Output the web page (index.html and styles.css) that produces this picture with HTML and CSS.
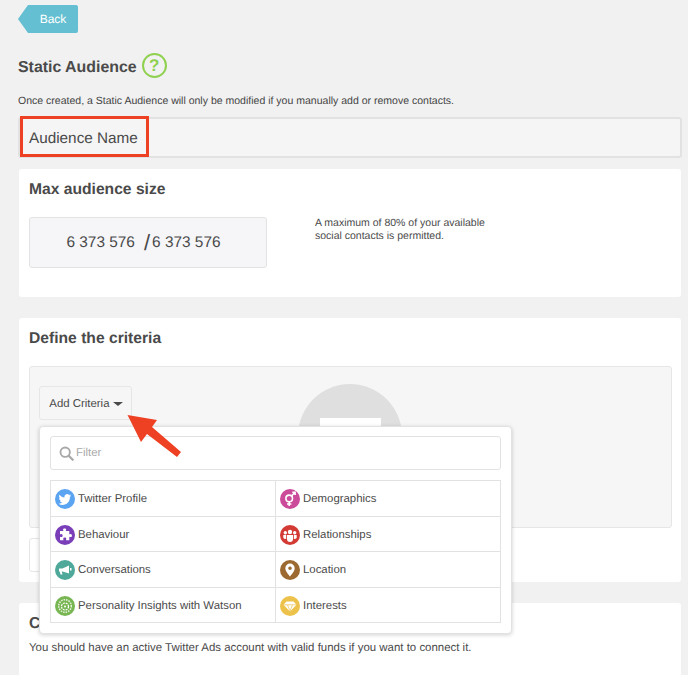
FILE: index.html
```html
<!DOCTYPE html>
<html lang="en">
<head>
<meta charset="utf-8">
<title>Static Audience</title>
<link rel="stylesheet" href="styles.css">
</head>
<body>
<div class="page">
  <a class="back">Back</a>
  <div class="title-row">
    <h1>Static Audience</h1>
    <span class="help">?</span>
  </div>
  <p class="intro">Once created, a Static Audience will only be modified if you manually add or remove contacts.</p>
  <div class="name-box"><span class="name-label">Audience Name</span></div>

  <section class="card card-size">
    <h2>Max audience size</h2>
    <div class="size-row">
      <div class="size-box"><span>6 373 576</span><span class="slash">/</span><span>6 373 576</span></div>
      <p class="size-note">A maximum of 80% of your available<br>social contacts is permitted.</p>
    </div>
  </section>

  <section class="card card-criteria">
    <h2>Define the criteria</h2>
    <div class="criteria-area">
      <button class="add-btn">Add Criteria <span class="caret"></span></button>
      <div class="placeholder"><span class="placeholder-bar"></span></div>
    </div>
    <div class="second-btn"></div>
  </section>

  <section class="card card-connect">
    <h2>Connect</h2>
    <p class="connect-text">You should have an active Twitter Ads account with valid funds if you want to connect it.</p>
  </section>
</div>

<div class="menu">
  <div class="filter">
    <svg class="filter-icon" viewBox="0 0 16 16" width="15" height="15"><circle cx="6.6" cy="6.6" r="5" fill="none" stroke="#a8a8a8" stroke-width="2"/><path d="M10.4 10.4 14.6 14.6" stroke="#a8a8a8" stroke-width="2.4" stroke-linecap="round"/></svg>
    <span>Filter</span>
  </div>
  <div class="grid">
    <div class="cell">
      <svg class="ico" viewBox="0 0 20 20"><circle cx="10" cy="10" r="10" fill="#5ba4f2"/><path d="M16 6.3c-.5.2-1 .4-1.5.4.5-.3 1-.8 1.2-1.4-.5.3-1.1.5-1.7.7a2.7 2.7 0 0 0-4.6 2.4C7.6 8.3 5.7 7.300 4.400 5.700c-.7 1.200-.4 2.800.8 3.600-.4 0-.8-.1-1.200-.3 0 1.300.9 2.400 2.100 2.700-.4.1-.8.1-1.200 0 .3 1.100 1.300 1.800 2.500 1.900-1.100.9-2.500 1.200-3.900 1.100 4.900 3 11.600.2 11.400-6.700.5-.4 1-.9 1.100-1.700z" fill="#fff"/></svg>
      Twitter Profile
    </div>
    <div class="cell">
      <svg class="ico" viewBox="0 0 20 20"><circle cx="10" cy="10" r="10" fill="#cb4a99"/><circle cx="9.2" cy="9.4" r="3.3" fill="none" stroke="#fff" stroke-width="1.6"/><path d="M9.2 12.7v4.3M7 15h4.4M11.5 7l3-3.2M12.3 3.2h2.8V6" fill="none" stroke="#fff" stroke-width="1.6"/></svg>
      Demographics
    </div>
    <div class="cell">
      <svg class="ico" viewBox="0 0 20 20"><circle cx="10" cy="10" r="10" fill="#7a3fb8"/><path d="M8 4.500c0-1.500 3.200-1.500 3.200 0 0 .7-.4 1-.4 1.500h3.500v3.300c.5 0 .8-.4 1.500-.4 1.500 0 1.500 3.200 0 3.200-.7 0-1-.4-1.500-.4v3.500h-3.300c0-.5.300-.8.300-1.500 0-1.500-3.100-1.500-3.100 0 0 .7.300 1 .3 1.500H5v-3.500c.5 0 .8.400 1.500.4 1.500 0 1.500-3.200 0-3.200-.7 0-1 .4-1.500.4V6h3.400c0-.5-.4-.8-.4-1.500z" fill="#fff"/></svg>
      Behaviour
    </div>
    <div class="cell">
      <svg class="ico" viewBox="0 0 20 20"><circle cx="10" cy="10" r="10" fill="#d23a33"/><circle cx="10" cy="7" r="2.2" fill="#fff"/><circle cx="5.3" cy="7.8" r="1.7" fill="#fff"/><circle cx="14.7" cy="7.8" r="1.7" fill="#fff"/><path d="M7 10h6v4a3 3 0 0 1-6 0zM3.300 10h2.900v4l-2-.3a1.500 1.500 0 0 1-.9-1zM13.800 10h2.900v2.700a1.500 1.500 0 0 1-.9 1l-2 .3z" fill="#fff"/></svg>
      Relationships
    </div>
    <div class="cell">
      <svg class="ico" viewBox="0 0 20 20"><circle cx="10" cy="10" r="10" fill="#4fa99a"/><path d="M4 8.500h3.500L14 5.500v8L7.500 11.500H6.800l.7 3H5.500L4.800 11.500H4zM15 8h1.500v2.500H15z" fill="#fff"/></svg>
      Conversations
    </div>
    <div class="cell">
      <svg class="ico" viewBox="0 0 20 20"><circle cx="10" cy="10" r="10" fill="#9c6a31"/><path fill-rule="evenodd" d="M10 3.500a4.700 4.700 0 0 0-4.700 4.700c0 3 3.400 6.400 4.700 8.300 1.300-1.900 4.700-5.300 4.700-8.300A4.700 4.700 0 0 0 10 3.500zm0 3a1.800 1.800 0 1 1 0 3.600 1.800 1.800 0 0 1 0-3.600z" fill="#fff"/></svg>
      Location
    </div>
    <div class="cell">
      <svg class="ico" viewBox="0 0 20 20"><circle cx="10" cy="10" r="10" fill="#78b653"/><circle cx="10" cy="10" r="6.3" fill="none" stroke="#e6f2dc" stroke-width="1.5" stroke-dasharray="1.5 1"/><circle cx="10" cy="10.5" r="3.5" fill="none" stroke="#fff" stroke-width="1.2" stroke-dasharray="2 .8"/><circle cx="10" cy="10.5" r="1" fill="#fff"/></svg>
      Personality Insights with Watson
    </div>
    <div class="cell">
      <svg class="ico" viewBox="0 0 20 20"><circle cx="10" cy="10" r="10" fill="#ecc24b"/><path d="M6.500 5.500h7l3 3.300L10 15.500 3.500 8.800z" fill="#fff"/><path d="M3.500 8.800h13M7.500 8.800 10 15M12.500 8.800 10 15" fill="none" stroke="#ecc24b" stroke-width=".7"/></svg>
      Interests
    </div>
  </div>
</div>

<svg class="red-arrow" viewBox="0 0 60 50" width="60" height="50"><path d="M2.500 2 32 7 27 14 56 39 52 44 22 21 16 29z" fill="#ee4023"/></svg>
</body>
</html>
```
FILE: styles.css
```css
* { box-sizing: border-box; }
html, body { margin: 0; padding: 0; }
body {
  position: relative;
  height: 675px;
  overflow: hidden;
  background: #f1f1f1;
  color: #4a4a4a;
  font-family: "Liberation Sans", Arial, sans-serif;
  text-rendering: geometricPrecision;
}
.page { padding: 5px 6px 0 18px; height: 675px; overflow: hidden; }
.back {
  position: relative;
  display: flex;
  align-items: center;
  justify-content: center;
  width: 50px;
  height: 28px;
  margin-left: 10px;
  background: #63bfd1;
  border-radius: 0 2px 2px 0;
  color: #fff;
  font-size: 12px;
}
.back::before {
  content: "";
  position: absolute;
  left: -10px;
  top: 0;
  border-top: 14px solid transparent;
  border-bottom: 14px solid transparent;
  border-right: 10px solid #63bfd1;
}
.title-row { display: flex; align-items: center; gap: 5px; margin-top: 19px; height: 27px; }
h1 { margin: 0; padding-top: 5px; font-size: 15.9px; font-weight: 700; color: #4a4a4a; }
.help {
  width: 25px;
  height: 25px;
  display: flex;
  align-items: center;
  justify-content: center;
  border: 2px solid #8fd14f;
  border-radius: 50%;
  color: #8fd14f;
  font-size: 17px;
  font-weight: 700;
}
.intro { margin: 15px 0 0; font-size: 10.53px; line-height: 14px; color: #444; }
.name-box {
  height: 41px;
  margin-top: 9px;
  background: #f5f5f5;
  border: 2px solid #e2e2e2;
  border-radius: 3px;
  display: flex;
  align-items: center;
}
.name-label {
  position: relative;
  display: flex;
  align-items: center;
  width: 129px;
  height: 41px;
  margin-top: -2px;
  padding: 5px 0 0 6px;
  border: 3px solid #ee4023;
  font-size: 15.3px;
  color: #4a4a4a;
}
.card {
  margin: 0 1px;
  background: #fff;
  border-radius: 3px;
  padding: 11px 10px 0;
}
h2 { margin: 0; font-size: 15.65px; line-height: 20px; font-weight: 700; color: #4a4a4a; }
.card-size { height: 128px; margin-top: 11px; }
.size-row { display: flex; margin-top: 17px; }
.size-box {
  width: 238px;
  height: 51px;
  padding-right: 9px;
  display: flex;
  align-items: center;
  justify-content: center;
  background: #f6f6f8;
  border: 1px solid #e3e3e3;
  border-radius: 3px;
  font-size: 15.4px;
  color: #4a4a4a;
}
.slash { font-size: 22px; margin: 0 2px 0 9px; }
.size-note { margin: 0 0 0 48px; font-size: 10.5px; line-height: 13px; color: #4a4a4a; }
.card-criteria { height: 264px; margin-top: 21px; padding-right: 9px; }
.criteria-area {
  position: relative;
  height: 162px;
  margin-top: 17px;
  padding: 19px 9px;
  background: #f6f6f6;
  border: 1px solid #e6e6e6;
  border-radius: 3px;
  overflow: hidden;
}
.add-btn {
  display: block;
  width: 93px;
  height: 34px;
  padding: 2px 0 0 1px;
  background: #f6f6f6;
  border: 1px solid #e6e6e6;
  border-radius: 3px;
  color: #4a4a4a;
  font: 11.4px "Liberation Sans", Arial, sans-serif;
  text-rendering: geometricPrecision;
}
.caret {
  display: inline-block;
  vertical-align: middle;
  border-left: 5px solid transparent;
  border-right: 5px solid transparent;
  border-top: 4px solid #4a4a4a;
}
.placeholder {
  position: absolute;
  left: 268px;
  top: 17px;
  width: 104px;
  height: 104px;
  border-radius: 50%;
  background: #dfdfdf;
  display: flex;
  justify-content: center;
}
.placeholder-bar { width: 61px; height: 30px; margin-top: 34px; background: #fff; }
.second-btn { width: 60px; height: 34px; margin-top: 10px; border: 1px solid #e6e6e6; border-radius: 3px; }
.card-connect { height: 120px; margin-top: 21px; }
.connect-text { margin: 6px 0 0; font-size: 11.45px; line-height: 16px; color: #4a4a4a; }
.menu {
  position: absolute;
  left: 39px;
  top: 426px;
  width: 473px;
  height: 208px;
  padding: 9px 10px;
  background: #fff;
  border: 1px solid #e2e2e2;
  border-radius: 4px;
  box-shadow: 0 1px 4px rgba(0, 0, 0, .18);
}
.filter {
  display: flex;
  align-items: center;
  gap: 2px;
  height: 34px;
  padding: 0 0 0 8px;
  border: 1px solid #e2e2e2;
  border-radius: 3px;
  color: #a9a9a9;
  font-size: 11.4px;
}
.grid {
  display: grid;
  grid-template-columns: 225px 225px;
  grid-auto-rows: 35.5px;
  margin-top: 10px;
  border-top: 1px solid #e2e2e2;
  border-left: 1px solid #e2e2e2;
}
.cell {
  display: flex;
  align-items: center;
  gap: 3px;
  padding: 2px 0 0 4px;
  border-right: 1px solid #e2e2e2;
  border-bottom: 1px solid #e2e2e2;
  font-size: 11.4px;
  color: #4a4a4a;
}
.ico { width: 20px; height: 20px; flex: none; }
.red-arrow { position: absolute; left: 125px; top: 413px; }
```
